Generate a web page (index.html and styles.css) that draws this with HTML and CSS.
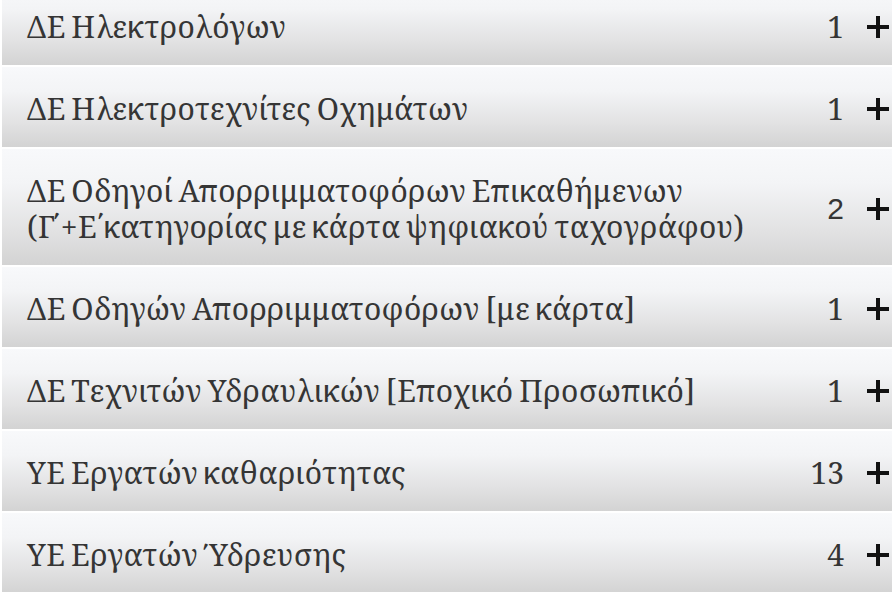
FILE: index.html
```html
<!DOCTYPE html>
<html lang="el">
<head>
<meta charset="utf-8">
<link rel="stylesheet" href="styles.css">
</head>
<body>
<ul class="list">
  <li class="row"><span class="name">ΔΕ Ηλεκτρολόγων</span><span class="count">1</span><span class="plus"><svg viewBox="0 0 24 24" width="24" height="24"><path d="M12 1v22M1 12h22" stroke="#111" stroke-width="4" fill="none"/></svg></span></li>
  <li class="row"><span class="name">ΔΕ Ηλεκτροτεχνίτες Οχημάτων</span><span class="count">1</span><span class="plus"><svg viewBox="0 0 24 24" width="24" height="24"><path d="M12 1v22M1 12h22" stroke="#111" stroke-width="4" fill="none"/></svg></span></li>
  <li class="row"><span class="name">ΔΕ Οδηγοί Απορριμματοφόρων Επικαθήμενων<br>(Γ΄+Ε΄κατηγορίας με κάρτα ψηφιακού ταχογράφου)</span><span class="count sans">2</span><span class="plus"><svg viewBox="0 0 24 24" width="24" height="24"><path d="M12 1v22M1 12h22" stroke="#111" stroke-width="4" fill="none"/></svg></span></li>
  <li class="row"><span class="name">ΔΕ Οδηγών Απορριμματοφόρων [με κάρτα]</span><span class="count">1</span><span class="plus"><svg viewBox="0 0 24 24" width="24" height="24"><path d="M12 1v22M1 12h22" stroke="#111" stroke-width="4" fill="none"/></svg></span></li>
  <li class="row"><span class="name">ΔΕ Τεχνιτών Υδραυλικών [Εποχικό Προσωπικό]</span><span class="count">1</span><span class="plus"><svg viewBox="0 0 24 24" width="24" height="24"><path d="M12 1v22M1 12h22" stroke="#111" stroke-width="4" fill="none"/></svg></span></li>
  <li class="row"><span class="name">ΥΕ Εργατών καθαριότητας</span><span class="count">13</span><span class="plus"><svg viewBox="0 0 24 24" width="24" height="24"><path d="M12 1v22M1 12h22" stroke="#111" stroke-width="4" fill="none"/></svg></span></li>
  <li class="row"><span class="name">ΥΕ Εργατών Ύδρευσης</span><span class="count">4</span><span class="plus"><svg viewBox="0 0 24 24" width="24" height="24"><path d="M12 1v22M1 12h22" stroke="#111" stroke-width="4" fill="none"/></svg></span></li>
</ul>
</body>
</html>
```

FILE: styles.css
```css
html, body {
  margin: 0;
  padding: 0;
  background: #ffffff;
  overflow: hidden;
}
.list {
  list-style: none;
  margin: -15px 0 0 2px;
  padding: 0;
  display: flex;
  flex-direction: column;
  gap: 2px;
  width: 900px;
}
.row {
  display: flex;
  align-items: center;
  padding: 24px 0 20px 25px;
  background: linear-gradient(to bottom, #f8f9fb 0%, #f3f4f6 30%, #e2e2e3 70%, #d3d3d3 100%);
  font-family: "Noto Serif", "DejaVu Serif", serif;
  font-size: 30px;
  line-height: 36px;
  color: #353535;
}
.name {
  flex: 1;
  letter-spacing: 0.6px;
  word-spacing: -3px;
}
.count {
  margin-right: 22px;
}
.count.sans {
  font-family: "Liberation Sans", Arial, sans-serif;
}
.plus {
  width: 24px;
  height: 24px;
  margin-right: 12px;
  display: flex;
}
```
